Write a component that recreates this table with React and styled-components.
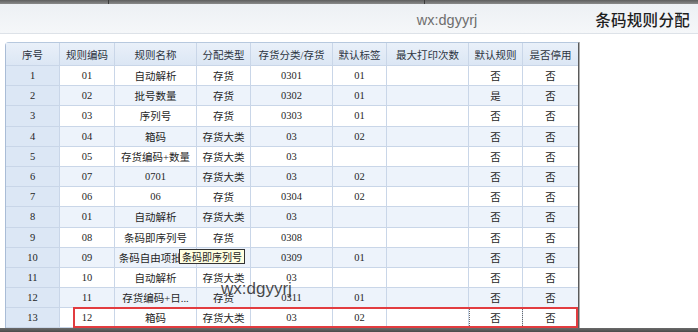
import React from "react";
import styled, { createGlobalStyle } from "styled-components";

const Global = createGlobalStyle`
  html, body { margin: 0; padding: 0; background: #fff; }
  body { width: 698px; height: 332px; overflow: hidden; font-family: "Liberation Serif", "Noto Sans CJK SC", serif; }
`;

const Page = styled.div`
  position: relative;
  width: 698px;
  height: 332px;
  display: flex;
  flex-direction: column;
  overflow: hidden;
`;

const TopStrip = styled.div`
  height: 4px;
  flex: none;
  background: linear-gradient(#5e5e5e, #8a8a8a);
  display: flex;
`;

const StripSeg = styled.div`
  width: ${(p) => p.$w}px;
  border-right: 1px solid #3c3c3c;
`;

const HeaderBar = styled.div`
  height: 29px;
  flex: none;
  background: linear-gradient(#edf0f4, #f5f7f9);
  border-bottom: 1px solid #dde2e8;
  display: flex;
  align-items: center;
  justify-content: flex-end;
  padding-right: 8px;
`;

const Mark = styled.div`
  font-family: "Liberation Sans", Arial, sans-serif;
  font-size: 14.5px;
  color: #6e6e6e;
  margin-right: 118px;
  margin-top: 2px;
`;

const Title = styled.div`
  font-family: "Noto Sans CJK SC", sans-serif;
  font-size: 15.5px;
  font-weight: 500;
  color: #1e1e1e;
  letter-spacing: 0.3px;
`;

const Body = styled.div`
  flex: 1;
  padding-top: 8px;
  padding-left: 5px;
  display: flex;
  align-items: flex-start;
`;

const Table = styled.div`
  position: relative;
  border-left: 1px solid #a9bcd6;
  border-top: 1px solid #b6c8de;
  border-right: 1px solid #5a5a5a;
  border-top-left-radius: 4px;
  box-shadow: 1px 0 0 #b0b0b0;
  height: 300px;
`;

const COLS = "54px 55px 82px 54px 82px 54px 82px 54px 55px";

const Row = styled.div`
  display: grid;
  grid-template-columns: ${COLS};
  height: ${(p) => (p.$head ? 23 : 20.2)}px;
  background: ${(p) =>
    p.$head ? "linear-gradient(#e9f0f9, #dbe6f4)" : p.$alt ? "#edf3fb" : "#ffffff"};
`;

const Cell = styled.div`
  box-sizing: border-box;
  border-right: ${(p) => (p.$last ? "none" : "1px solid #c9d6e8")};
  border-bottom: 1px solid #c9d6e8;
  display: flex;
  align-items: center;
  justify-content: center;
  white-space: nowrap;
  overflow: hidden;
  font-size: ${(p) => (p.$head ? "10.5px" : "10.5px")};
  color: ${(p) => (p.$head ? "#2c3440" : "#1f1f1f")};
  background: ${(p) => (p.$index ? "#dce7f5" : "transparent")};
  ${(p) => (p.$focus ? "outline: 1px dotted #6a6a6a; outline-offset: -1px;" : "")}
`;

const Tooltip = styled.div`
  position: absolute;
  left: 173px;
  top: 206px;
  padding: 0 2px;
  height: 15px;
  line-height: 14px;
  font-family: "Noto Sans CJK SC", sans-serif;
  font-size: 10px;
  color: #222;
  background: #ffffe1;
  border: 1px solid #333;
  box-sizing: border-box;
`;

const Watermark = styled.div`
  position: absolute;
  left: 215px;
  top: 236px;
  font-family: "Liberation Sans", Arial, sans-serif;
  font-size: 17px;
  color: rgba(40, 40, 40, 0.85);
  pointer-events: none;
`;

const Highlight = styled.div`
  position: absolute;
  left: 67px;
  top: 264px;
  width: 505px;
  height: 21px;
  border: 2px solid #e23c40;
  box-sizing: border-box;
  pointer-events: none;
`;

const BottomStrip = styled.div`
  position: absolute;
  left: 0;
  right: 0;
  bottom: 0;
  height: 4px;
  background: linear-gradient(#6b6b6b, #4a4a4a);
`;

const headers = ["序号", "规则编码", "规则名称", "分配类型", "存货分类/存货", "默认标签", "最大打印次数", "默认规则", "是否停用"];

const rows = [
  ["01", "自动解析", "存货", "0301", "01", "", "否", "否"],
  ["02", "批号数量", "存货", "0302", "01", "", "是", "否"],
  ["03", "序列号", "存货", "0303", "01", "", "否", "否"],
  ["04", "箱码", "存货大类", "03", "02", "", "否", "否"],
  ["05", "存货编码+数量", "存货大类", "03", "", "", "否", "否"],
  ["07", "0701", "存货大类", "03", "02", "", "否", "否"],
  ["06", "06", "存货", "0304", "02", "", "否", "否"],
  ["01", "自动解析", "存货大类", "03", "", "", "否", "否"],
  ["08", "条码即序列号", "存货", "0308", "", "", "否", "否"],
  ["09", "条码自由项批次", "存货", "0309", "01", "", "否", "否"],
  ["10", "自动解析", "存货大类", "03", "", "", "否", "否"],
  ["11", "存货编码+日...", "存货", "0311", "01", "", "否", "否"],
  ["12", "箱码", "存货大类", "03", "02", "", "否", "否"],
];

export default function App() {
  return (
    <Page>
      <Global />
      <TopStrip>
        <StripSeg $w={108} />
        <StripSeg $w={315} />
      </TopStrip>
      <HeaderBar>
        <Mark>wx:dgyyrj</Mark>
        <Title>条码规则分配</Title>
      </HeaderBar>
      <Body>
        <Table>
          <Row $head>
            {headers.map((h, i) => (
              <Cell key={i} $head $last={i === headers.length - 1}>
                {h}
              </Cell>
            ))}
          </Row>
          {rows.map((r, ri) => (
            <Row key={ri} $alt={ri % 2 === 1}>
              <Cell $index>{ri + 1}</Cell>
              {r.map((v, ci) => (
                <Cell
                  key={ci}
                  $last={ci === r.length - 1}
                  $focus={ri === rows.length - 1 && ci === 6}
                >
                  {v}
                </Cell>
              ))}
            </Row>
          ))}
          <Tooltip>条码即序列号</Tooltip>
          <Watermark>wx:dgyyrj</Watermark>
          <Highlight />
        </Table>
      </Body>
      <BottomStrip />
    </Page>
  );
}
